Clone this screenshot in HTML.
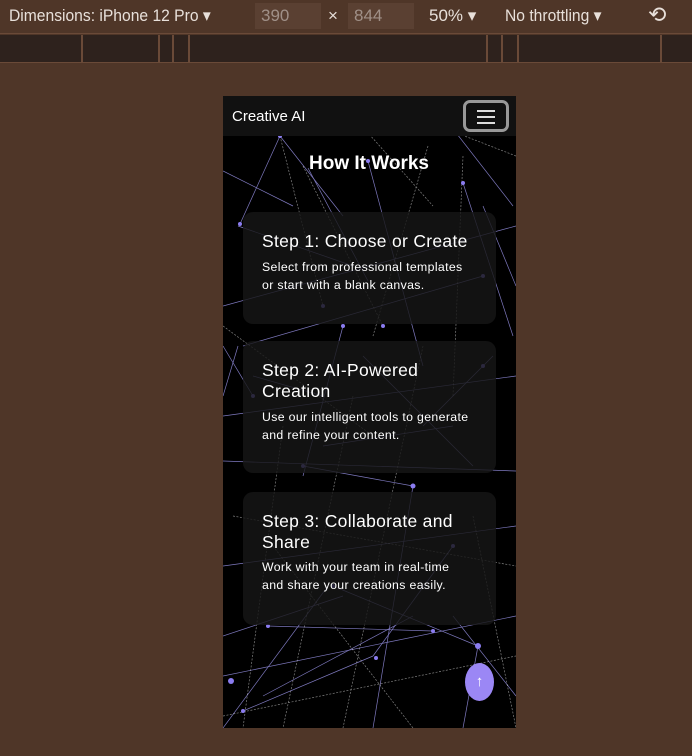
<!DOCTYPE html>
<html><head><meta charset="utf-8"><style>
*{margin:0;padding:0;box-sizing:border-box}
body{width:692px;height:756px;background:#4f3628;font-family:"Liberation Sans",sans-serif;position:relative;overflow:hidden}
.top{position:absolute;left:0;top:0;width:692px;height:34px;background:#4f3628;color:#e8e0da;font-size:17px;border-bottom:1px solid #6a4a38}
.top span{position:absolute;top:6px;transform-origin:left;}
.ruler{position:absolute;left:0;top:35px;width:692px;height:28px;background:#2e221d;border-bottom:1px solid #6a4a38}
.ruler i{position:absolute;top:0;width:2px;height:28px;background:#6a4a38}
.phone{position:absolute;left:223px;top:96px;width:293px;height:632px;background:#000;overflow:hidden}
.nav{position:absolute;left:0;top:0;width:293px;height:40px;background:#111;color:#fff;font-size:15px}
.ham{position:absolute;left:240px;top:4px;width:46px;height:32px;border:3px solid #999;border-radius:7px}
.ham b{position:absolute;left:11px;width:18px;height:1.5px;background:#ddd}
.card{position:absolute;left:20px;width:253px;background:rgba(22,22,22,.82);border-radius:10px;color:#fff}
.card h3{position:absolute;left:19px;width:215px;font-weight:normal;font-size:17.5px;line-height:21px;letter-spacing:0.3px}
.card p{position:absolute;left:19px;font-size:12.3px;line-height:18px;width:208px;letter-spacing:0.35px}
svg{position:absolute;left:0;top:0}
</style></head><body>
<div class="top"><span style="left:9px;transform:scaleX(.92)">Dimensions: iPhone 12 Pro ▾</span>
<span style="left:255px;top:3px;background:#5a4032;width:66px;height:26px;color:#a09088;padding:3px 6px">390</span>
<span style="left:328px">×</span>
<span style="left:348px;top:3px;background:#5a4032;width:66px;height:26px;color:#a09088;padding:3px 6px">844</span>
<span style="left:429px">50% ▾</span><span style="left:505px;transform:scaleX(.92)">No throttling ▾</span><span style="left:648px;font-size:22px;top:2px">⟲</span></div>
<div class="ruler"><i style="left:81px"></i><i style="left:158px"></i><i style="left:172px"></i><i style="left:188px"></i><i style="left:486px"></i><i style="left:501px"></i><i style="left:517px"></i><i style="left:660px"></i></div>
<div class="phone">
<svg width="293" height="632" stroke-width="0.7">
<g stroke="#a9a2ff" opacity="0.75">
<line x1="57" y1="40" x2="17" y2="128"/><line x1="57" y1="40" x2="120" y2="120"/><line x1="85" y1="72" x2="145" y2="185"/><line x1="145" y1="65" x2="200" y2="270"/><line x1="220" y1="20" x2="290" y2="110"/><line x1="240" y1="87" x2="290" y2="240"/><line x1="0" y1="210" x2="293" y2="130"/><line x1="20" y1="250" x2="260" y2="180"/><line x1="0" y1="320" x2="293" y2="280"/><line x1="120" y1="230" x2="80" y2="380"/><line x1="140" y1="260" x2="250" y2="370"/><line x1="0" y1="365" x2="293" y2="375"/><line x1="80" y1="370" x2="190" y2="390"/><line x1="105" y1="490" x2="0" y2="632"/><line x1="110" y1="490" x2="255" y2="550"/><line x1="45" y1="530" x2="210" y2="535"/><line x1="0" y1="580" x2="293" y2="520"/><line x1="20" y1="615" x2="150" y2="560"/><line x1="190" y1="390" x2="150" y2="632"/><line x1="255" y1="550" x2="240" y2="632"/><line x1="0" y1="470" x2="293" y2="430"/><line x1="30" y1="280" x2="100" y2="300"/><line x1="200" y1="330" x2="270" y2="260"/>
<line x1="0" y1="75" x2="70" y2="110"/><line x1="15" y1="130" x2="130" y2="170"/><line x1="260" y1="110" x2="293" y2="190"/><line x1="15" y1="250" x2="0" y2="300"/><line x1="0" y1="250" x2="30" y2="300"/><line x1="100" y1="350" x2="230" y2="330"/><line x1="40" y1="600" x2="190" y2="520"/><line x1="230" y1="520" x2="293" y2="600"/><line x1="0" y1="540" x2="120" y2="500"/><line x1="150" y1="560" x2="230" y2="450"/>
</g>
<g stroke="#ffffff" opacity="0.5" stroke-dasharray="2 1.5">
<line x1="57" y1="40" x2="100" y2="210"/><line x1="80" y1="70" x2="160" y2="230"/><line x1="205" y1="50" x2="150" y2="240"/><line x1="240" y1="60" x2="230" y2="300"/><line x1="0" y1="230" x2="150" y2="340"/><line x1="60" y1="330" x2="20" y2="632"/><line x1="130" y1="300" x2="60" y2="632"/><line x1="200" y1="250" x2="120" y2="632"/><line x1="10" y1="420" x2="293" y2="470"/><line x1="50" y1="450" x2="190" y2="632"/><line x1="250" y1="420" x2="293" y2="632"/><line x1="190" y1="20" x2="293" y2="60"/><line x1="130" y1="20" x2="210" y2="110"/><line x1="0" y1="620" x2="293" y2="560"/>
</g>
<g fill="#8b7cf0"><circle cx="57" cy="40" r="2"/><circle cx="145" cy="65" r="2"/><circle cx="240" cy="87" r="2"/><circle cx="120" cy="230" r="2"/><circle cx="80" cy="370" r="2"/><circle cx="190" cy="390" r="2.5"/><circle cx="110" cy="490" r="2"/><circle cx="255" cy="550" r="3"/><circle cx="153" cy="562" r="2"/><circle cx="210" cy="535" r="2"/><circle cx="20" cy="615" r="2"/><circle cx="260" cy="270" r="2"/><circle cx="17" cy="128" r="2"/><circle cx="100" cy="210" r="2"/><circle cx="160" cy="230" r="2"/><circle cx="30" cy="300" r="2"/><circle cx="260" cy="180" r="2"/><circle cx="45" cy="530" r="2"/><circle cx="230" cy="450" r="2"/><circle cx="8" cy="585" r="3"/></g>
</svg>
<div class="nav"><span style="position:absolute;left:9px;top:12px">Creative AI</span><div class="ham"><b style="top:7px"></b><b style="top:13px"></b><b style="top:19px"></b></div></div>
<div style="position:absolute;left:86px;top:57px;color:#fff;font-weight:bold;font-size:19px">How It Works</div>
<div class="card" style="top:116px;height:112px"><h3 style="top:19px">Step 1: Choose or Create</h3><p style="top:46px">Select from professional templates or start with a blank canvas.</p></div>
<div class="card" style="top:245px;height:132px"><h3 style="top:19px">Step 2: AI-Powered Creation</h3><p style="top:67px">Use our intelligent tools to generate and refine your content.</p></div>
<div class="card" style="top:396px;height:133px"><h3 style="top:19px">Step 3: Collaborate and Share</h3><p style="top:66px">Work with your team in real-time and share your creations easily.</p></div>
<div style="position:absolute;left:242px;top:567px;width:29px;height:38px;border-radius:50%;background:#9b87f5;color:#fff;text-align:center;line-height:38px;font-size:15px">↑</div>
</div>
</body></html>
